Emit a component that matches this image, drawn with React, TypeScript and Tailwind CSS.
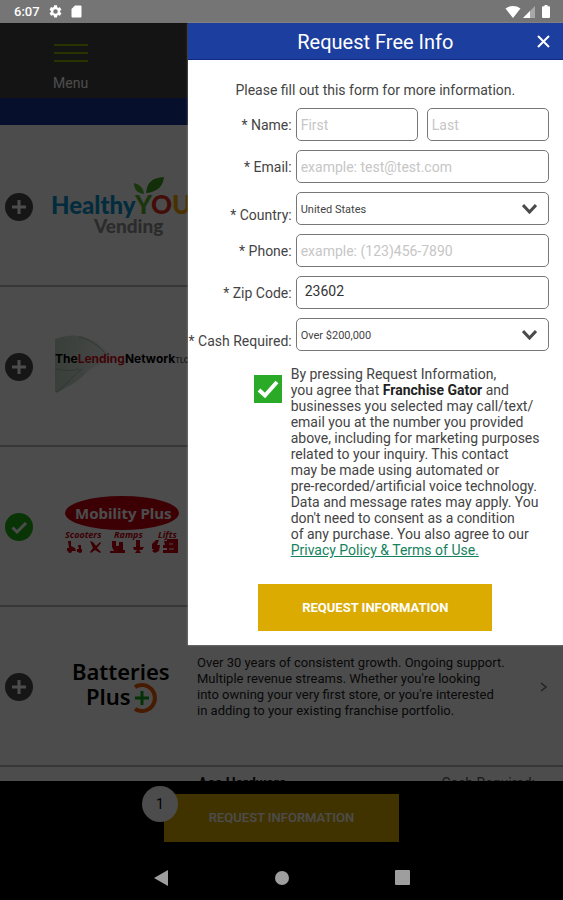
import type { ReactNode } from "react";

function StatusBar() {
  return (
    <div className="flex h-[23px] shrink-0 items-center justify-between bg-[#757575] pr-[13px] pl-3.5 text-white">
      <div className="flex items-center">
        <span className="text-[13px] leading-4 font-medium">6:07</span>
        <svg className="ml-2 size-[15px]" viewBox="0 0 24 24" fill="currentColor" aria-hidden="true">
          <path d="M19.14 12.94c.04-.3.06-.61.06-.94s-.02-.64-.07-.94l2.03-1.58a.49.49 0 0 0 .12-.61l-1.92-3.32a.49.49 0 0 0-.59-.22l-2.39.96a7 7 0 0 0-1.62-.94l-.36-2.54A.48.48 0 0 0 13.92 2h-3.84a.48.48 0 0 0-.47.41l-.36 2.54a7 7 0 0 0-1.62.94l-2.39-.96a.48.48 0 0 0-.59.22L2.74 8.87a.47.47 0 0 0 .12.61l2.03 1.58a7.3 7.3 0 0 0 0 1.88l-2.03 1.58a.49.49 0 0 0-.12.61l1.92 3.32c.12.22.37.29.59.22l2.39-.96c.5.38 1.03.7 1.62.94l.36 2.54c.05.24.24.41.48.41h3.84c.24 0 .44-.17.47-.41l.36-2.54a7 7 0 0 0 1.62-.94l2.39.96c.22.08.47 0 .59-.22l1.92-3.32a.47.47 0 0 0-.12-.61zM12 15.6a3.6 3.6 0 1 1 0-7.2 3.6 3.6 0 0 1 0 7.2z" />
        </svg>
        <svg className="ml-2 h-[13px] w-[11px]" viewBox="0 0 11 13" fill="currentColor" aria-hidden="true">
          <path d="M4 0.5h5.500a1 1 0 0 1 1 1v10a1 1 0 0 1-1 1h-8a1 1 0 0 1-1-1V4z" />
        </svg>
      </div>
      <div className="flex items-center">
        <svg className="h-3 w-4" viewBox="0 0 16 12" fill="currentColor" aria-hidden="true">
          <path d="M0.500 2.500C5-.8 11-.8 15.500 2.500L8 12z" />
        </svg>
        <svg className="ml-0.5 size-3" viewBox="0 0 12 12" aria-hidden="true">
          <path d="M12 0v12H0z" fill="#a8a8a8" />
          <path d="M7 5v7H0z" fill="#fff" />
        </svg>
        <svg className="ml-[7px] h-[13px] w-2" viewBox="0 0 8 13" fill="currentColor" aria-hidden="true">
          <path d="M2.500 0h3v1.300H7a1 1 0 0 1 1 1V12a1 1 0 0 1-1 1H1a1 1 0 0 1-1-1V2.300a1 1 0 0 1 1-1h1.500z" />
        </svg>
      </div>
    </div>
  );
}

function HealthyYouLogo() {
  return (
    <svg className="h-[100px] w-[148px] shrink-0" viewBox="0 0 148 100" role="img" aria-label="Healthy You Vending">
      <g fontFamily="Lato, sans-serif" fontWeight="900">
        <text x="6" y="57" fontSize="24" fill="#0795d0">Healthy</text>
        <text x="90" y="57" fontSize="26" fill="#5cb531">
          Y<tspan fill="#e0311c">O</tspan><tspan fill="#f5a300">U</tspan>
        </text>
        <text x="49" y="76" fontSize="19" fill="#929292">Vending</text>
      </g>
      <path d="M101 36c1-10 5-15 18-16-1 9-6 15-18 16z" fill="#3f9f20" />
      <path d="M99 37c-1-7-4-9-10-11 0 6 3 10 10 11z" fill="#54b52c" />
    </svg>
  );
}

function LendingNetworkLogo() {
  return (
    <svg className="h-[100px] w-[148px] shrink-0" viewBox="0 0 148 100" role="img" aria-label="The Lending Network">
      <defs>
        <linearGradient id="ribbon" x1="0" y1="0" x2="1" y2="0">
          <stop offset="0" stopColor="#bdd2c4" />
          <stop offset="1" stopColor="#f0f4f1" />
        </linearGradient>
      </defs>
      <path d="M10 22c16-6 32-5 46 7 5 4 8 10 11 15-14 3-20 6-28 14-6 7-18 12-27 18l-2-2z" fill="url(#ribbon)" />
      <path d="M34 20c14 3 24 12 32 24M11 75c12-8 16-16 26-23M10 52c12 2 18 2 24 0" fill="none" stroke="#a2b9aa" />
      <text x="10" y="46" fontFamily="Inter, sans-serif" fontSize="12" fontWeight="700" fill="#000">
        The<tspan fill="#d5101c">Lending</tspan>Network<tspan fontSize="7" fill="#666">TLC</tspan>
      </text>
    </svg>
  );
}

function MobilityPlusLogo() {
  return (
    <svg className="h-[100px] w-[148px] shrink-0" viewBox="0 0 148 100" role="img" aria-label="Mobility Plus">
      <ellipse cx="77" cy="36" rx="57" ry="17" fill="#c80010" />
      <text x="30" y="42" fontFamily="Noto Sans, sans-serif" fontSize="15" fontWeight="700" fill="#fff">Mobility Plus</text>
      <g fontFamily="Noto Sans, sans-serif" fontSize="9" fontWeight="700" fontStyle="italic" fill="#c80010">
        <text x="20" y="61">Scooters</text>
        <text x="69" y="61">Ramps</text>
        <text x="113" y="61">Lifts</text>
      </g>
      <g fill="#c80010">
        <path d="M23 64h3v5l4 2 1 3h-9v-3h2zM33 68h3v4h1v3h-5v-3h2z" />
        <circle cx="25" cy="74" r="2" /><circle cx="35" cy="74" r="2" />
        <path d="M45 64l3 1 3 4 4-4 1 1-4 5 4 4-1 1-5-3-4 3-1-1 3-4z" />
        <path d="M67 64h4v5h3v-4h4v8h2v3H65v-2h4l-2-4z" />
        <path d="M91 63h4v7h4l-2 3h-3l2 3h-6l2-3h-3l-1-3h3z" />
        <path d="M111 63h3l-2 5h3l-1 6-4 2-3-2 2-2h-2v-5z" />
        <path d="M119 64h3v-2h11v14h-15v-3h4v-2h-4v-3h2z" />
      </g>
      <path d="M124 67h4M124 72h5" stroke="#fff" />
    </svg>
  );
}

function BatteriesPlusLogo() {
  return (
    <svg className="h-[100px] w-[148px] shrink-0" viewBox="0 0 148 100" role="img" aria-label="Batteries Plus">
      <g fontFamily="Noto Sans, sans-serif" fontSize="22" fontWeight="600" fill="#000">
        <text x="27" y="43">Batteries</text>
        <text x="41" y="68">Plus</text>
      </g>
      <path d="M90 50a13 13 0 1 1 0 22" fill="none" stroke="#ee5a00" strokeWidth="4" />
      <path d="M97 54v14M90 61h14" stroke="#0fa51c" strokeWidth="3" />
    </svg>
  );
}

type RowProps = { name: string; selected?: boolean; logo: ReactNode; children?: ReactNode };

function FranchiseRow({ name, selected = false, logo, children }: RowProps) {
  return (
    <li className="flex h-40 shrink-0 items-center border-b-2 border-[#b8b8b8] pt-0.5 pl-[5px]">
      <button type="button" aria-label={name} aria-pressed={selected} className="size-7 shrink-0">
        <svg viewBox="0 0 28 28" className="size-7">
          <circle cx="14" cy="14" r="14" fill={selected ? "#1fae12" : "#4c4c4c"} />
          <path
            d={selected ? "M7.500 14.500l4.500 4.500 9-9" : "M14 7v14M7 14h14"}
            fill="none"
            stroke="#fff"
            strokeWidth="3"
          />
        </svg>
      </button>
      <div className="ml-3 shrink-0">{logo}</div>
      {children}
    </li>
  );
}

const inputClass =
  "h-[33px] w-full min-w-0 rounded-[5px] border border-[#777] bg-white px-1 text-sm text-[#333] placeholder:text-[#c6c6c6] placeholder:opacity-100";

function Field({ id, label, low = false, children }: { id: string; label: string; low?: boolean; children: ReactNode }) {
  return (
    <div className="flex items-center gap-1">
      <label
        htmlFor={id}
        className={`w-[104px] shrink-0 text-right text-sm leading-4 whitespace-nowrap text-[#444] ${low ? "pt-3" : ""}`}
      >
        {label}
      </label>
      <div className="relative flex min-w-0 flex-1 gap-[9px]">{children}</div>
    </div>
  );
}

function Select({ id, value }: { id: string; value: string }) {
  return (
    <>
      <select
        id={id}
        className="h-[33px] w-full appearance-none rounded-[5px] border border-[#777] bg-white px-1 pt-1 text-[11px] text-[#444]"
      >
        <option>{value}</option>
      </select>
      <svg
        className="pointer-events-none absolute top-3 right-3 h-[10px] w-[15px]"
        viewBox="0 0 15 10"
        fill="none"
        stroke="#4a4a4a"
        strokeWidth="3"
        aria-hidden="true"
      >
        <path d="M1 1l6.5 7L14 1" />
      </svg>
    </>
  );
}

function RequestDialog() {
  return (
    <section
      role="dialog"
      aria-labelledby="dialog-title"
      className="absolute top-0 right-0 w-2/3 bg-white shadow-[0_0_2px_#999]"
    >
      <header className="relative flex h-[37px] items-center justify-center border-b border-[#0e2a86] bg-[#1c3e9e] pt-0.5 text-white">
        <h1 id="dialog-title" className="text-xl">Request Free Info</h1>
        <button type="button" aria-label="Close" className="absolute top-3 right-[13px]">
          <svg className="size-[13px]" viewBox="0 0 13 13" stroke="currentColor" strokeWidth="2" aria-hidden="true">
            <path d="M1 1l11 11M12 1L1 12" />
          </svg>
        </button>
      </header>
      <form className="pt-5 pb-3.5">
        <p className="text-center text-sm leading-5 text-[#444]">Please fill out this form for more information.</p>
        <div className="mt-2 flex flex-col gap-[9px] pr-3.5">
          <Field id="first" label="* Name:">
            <input id="first" placeholder="First" className={inputClass} />
            <input aria-label="Last name" placeholder="Last" className={inputClass} />
          </Field>
          <Field id="email" label="* Email:">
            <input id="email" type="email" placeholder="example: test@test.com" className={inputClass} />
          </Field>
          <Field id="country" label="* Country:" low>
            <Select id="country" value="United States" />
          </Field>
          <Field id="phone" label="* Phone:">
            <input id="phone" type="tel" placeholder="example: (123)456-7890" className={inputClass} />
          </Field>
          <Field id="zip" label="* Zip Code:">
            <input
              id="zip"
              defaultValue="23602"
              className="h-[33px] w-full rounded-[5px] border border-[#777] bg-white px-2 pb-1 text-sm text-[#333]"
            />
          </Field>
          <Field id="cash" label="* Cash Required:" low>
            <Select id="cash" value="Over $200,000" />
          </Field>
        </div>
        <div className="mt-3.5 flex items-start gap-[9px] pl-[66px]">
          <div className="relative mt-2.5 size-7 shrink-0">
            <input
              id="consent"
              type="checkbox"
              defaultChecked
              className="block size-7 appearance-none bg-[#2aaa26]"
            />
            <svg
              className="pointer-events-none absolute inset-0 size-7"
              viewBox="0 0 28 28"
              fill="none"
              stroke="#fff"
              strokeWidth="4"
              aria-hidden="true"
            >
              <path d="M5 15l6 5.500L23 7" />
            </svg>
          </div>
          <label htmlFor="consent" className="pt-px text-sm leading-4 whitespace-nowrap text-[#444]">
            By pressing Request Information,
            <br />
            you agree that <b className="text-[#222]">Franchise Gator</b> and
            <br />
            businesses you selected may call/text/
            <br />
            email you at the number you provided
            <br />
            above, including for marketing purposes
            <br />
            related to your inquiry. This contact
            <br />
            may be made using automated or
            <br />
            pre-recorded/artificial voice technology.
            <br />
            Data and message rates may apply. You
            <br />
            don't need to consent as a condition
            <br />
            of any purchase. You also agree to our
            <br />
            <a href="#terms" className="text-[#16825d] underline">
              Privacy Policy &amp; Terms of Use.
            </a>
          </label>
        </div>
        <button
          type="submit"
          className="mx-auto mt-[26px] block h-[47px] w-[234px] bg-[#dbab02] text-[13px] font-bold text-white"
        >
          REQUEST INFORMATION
        </button>
      </form>
    </section>
  );
}

export default function App() {
  return (
    <div className="flex h-screen flex-col overflow-hidden bg-black font-[Roboto,sans-serif]">
      <StatusBar />
      <div className="relative flex min-h-0 flex-1 flex-col bg-white">
        <header className="flex h-[75px] shrink-0 items-end bg-[#444] pb-[5px] pl-[53px] text-white">
          <button type="button" className="flex flex-col items-center text-sm leading-5">
            <svg className="mb-2.5 h-5 w-[34px]" viewBox="0 0 34 20" aria-hidden="true">
              <path d="M0 2h34M0 10h34M0 18h34" stroke="#88b000" strokeWidth="2" />
            </svg>
            Menu
          </button>
        </header>
        <div className="h-[27px] shrink-0 bg-[#173795]" />
        <ul className="flex min-h-0 flex-1 flex-col overflow-hidden pt-0.5">
          <FranchiseRow name="Healthy You Vending" logo={<HealthyYouLogo />} />
          <FranchiseRow name="The Lending Network" logo={<LendingNetworkLogo />} />
          <FranchiseRow name="Mobility Plus" selected logo={<MobilityPlusLogo />} />
          <FranchiseRow name="Batteries Plus" logo={<BatteriesPlusLogo />}>
            <p className="ml-1 flex-1 text-[13px] leading-4 whitespace-nowrap text-[#222]">
              Over 30 years of consistent growth. Ongoing support.
              <br />
              Multiple revenue streams. Whether you're looking
              <br />
              into owning your very first store, or you're interested
              <br />
              in adding to your existing franchise portfolio.
            </p>
            <svg
              className="mr-4 h-2.5 w-[7px] shrink-0"
              viewBox="0 0 7 10"
              fill="none"
              stroke="#777"
              strokeWidth="1.5"
              aria-hidden="true"
            >
              <path d="M1 1l5 4-5 4" />
            </svg>
          </FranchiseRow>
          <li className="flex shrink-0 justify-between pt-1.5 pr-7 pl-[198px] text-sm leading-5">
            <b className="text-[#111]">Ace Hardware</b>
            <span className="text-[#555]">Cash Required:</span>
          </li>
        </ul>
        <footer className="flex h-[72px] shrink-0 justify-center bg-black pt-[13px]">
          <button type="button" className="relative h-12 w-[235px] bg-[#dbab02] text-[13px] font-medium text-white">
            REQUEST INFORMATION
            <span className="absolute -top-2 -left-[22px] flex size-9 items-center justify-center rounded-full bg-white text-sm font-normal text-black">
              1
            </span>
          </button>
        </footer>
        <div className="absolute inset-0 bg-black/70" />
        <RequestDialog />
      </div>
      <nav className="flex h-[47px] shrink-0 items-center justify-center gap-[105px] bg-black pt-0.5 text-[#9e9e9e]">
        <button type="button" aria-label="Back">
          <svg className="block size-4" viewBox="0 0 16 16" fill="currentColor">
            <path d="M15 0v16L1 8z" />
          </svg>
        </button>
        <button type="button" aria-label="Home">
          <svg className="block size-4" viewBox="0 0 16 16" fill="currentColor">
            <circle cx="8" cy="8" r="7" />
          </svg>
        </button>
        <button type="button" aria-label="Recent apps">
          <svg className="block size-4" viewBox="0 0 16 16" fill="currentColor">
            <rect width="15" height="15" rx="1" />
          </svg>
        </button>
      </nav>
    </div>
  );
}
